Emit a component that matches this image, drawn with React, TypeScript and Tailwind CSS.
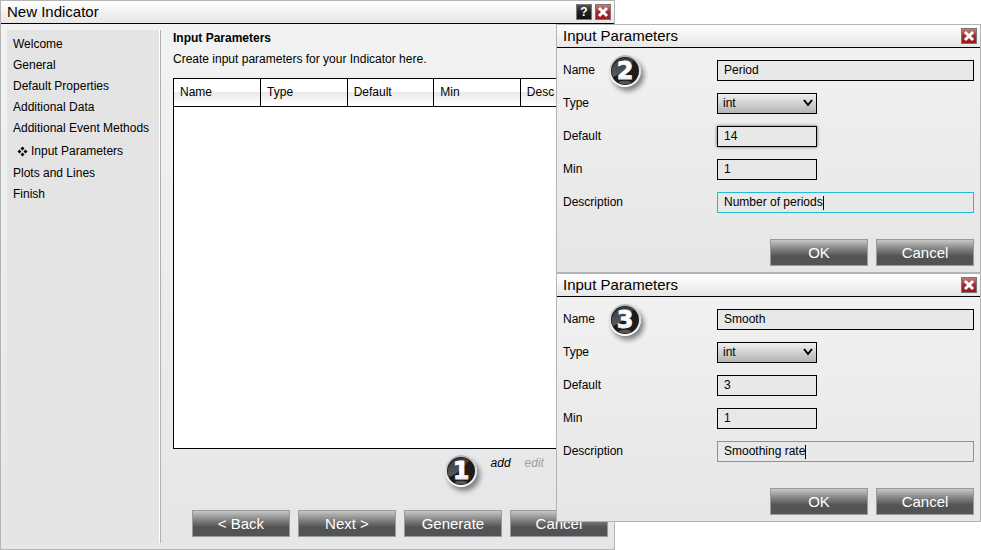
import { useState } from 'react';

const STEPS = [
  'Welcome',
  'General',
  'Default Properties',
  'Additional Data',
  'Additional Event Methods',
  'Input Parameters',
  'Plots and Lines',
  'Finish',
];

const COLUMNS = ['Name', 'Type', 'Default', 'Min', 'Desc'];

interface ParameterForm {
  name: string;
  type: string;
  defaultValue: string;
  min: string;
  description: string;
}

function StepBadge({ value }: { value: string }) {
  return (
    <svg
      viewBox="0 0 32 32"
      className="h-8 w-8 shrink-0 rounded-full not-italic shadow-[3px_4px_5px_rgba(0,0,0,0.45)]"
      aria-hidden="true"
    >
      <defs>
        <linearGradient id={`rim-${value}`} x1="0" y1="0" x2="0" y2="1">
          <stop offset="0" stopColor="#b4b4b4" />
          <stop offset="0.5" stopColor="#dedede" />
          <stop offset="1" stopColor="#ffffff" />
        </linearGradient>
        <linearGradient id={`sheen-${value}`} x1="0" y1="0" x2="0" y2="1">
          <stop offset="0" stopColor="#3a3a3a" />
          <stop offset="1" stopColor="#5c5c5c" />
        </linearGradient>
        <linearGradient id={`digit-${value}`} x1="0" y1="0" x2="0" y2="1">
          <stop offset="0.6" stopColor="#ffffff" />
          <stop offset="1" stopColor="#d4d4d4" />
        </linearGradient>
      </defs>
      <circle cx="16" cy="16" r="16" fill={`url(#rim-${value})`} />
      <circle cx="16" cy="16" r="14" fill="#1c1c1c" />
      <path d="M4 22 A13.8 13.8 0 0 1 25 5.5 C19 10 15 18 4 22 Z" fill={`url(#sheen-${value})`} />
      <ellipse cx="16" cy="27.5" rx="6" ry="1.8" fill="#555" />
      <text
        x="16"
        y="24"
        textAnchor="middle"
        fill={`url(#digit-${value})`}
        stroke={`url(#digit-${value})`}
        strokeWidth="0.8"
        className="font-['DejaVu_Sans',Verdana,sans-serif] text-[24px] font-bold"
      >
        {value}
      </text>
    </svg>
  );
}

function CloseButton() {
  return (
    <button
      type="button"
      aria-label="Close"
      className="flex h-4 w-4 items-center justify-center border border-[#777] bg-linear-to-b from-[#c47a7e] via-[#a02a32] to-[#a3141f]"
    >
      <svg viewBox="0 0 12 12" className="h-3 w-3" fill="none" stroke="#fff" strokeWidth="3">
        <path d="M2 2 L10 10 M10 2 L2 10" />
      </svg>
    </button>
  );
}

function TitleBar({ title, help }: { title: string; help?: boolean }) {
  return (
    <header className="flex h-[23px] items-center justify-between border-b border-black bg-linear-to-b from-white to-[#e6e6e6] pr-[3px] pl-[6px]">
      <h2 className="text-[15px] leading-5">{title}</h2>
      <div className="flex gap-[3px]">
        {help && (
          <button
            type="button"
            aria-label="Help"
            className="flex h-4 w-4 items-center justify-center border border-[#777] bg-linear-to-b from-[#555] via-[#222] to-[#111] text-[12px] leading-3 font-bold text-white"
          >
            ?
          </button>
        )}
        <CloseButton />
      </div>
    </header>
  );
}

function ActionButton({ label }: { label: string }) {
  return (
    <button
      type="button"
      className="h-[27px] w-[98px] border border-[#9a9a9a] bg-linear-to-b from-[#c8c8c8] via-[#7c7c7c] via-40% to-[#525354] to-65% text-[15px] leading-5 text-white"
    >
      {label}
    </button>
  );
}

function ParameterDialog({
  step,
  initial,
  highlightDefault,
}: {
  step: string;
  initial: ParameterForm;
  highlightDefault?: boolean;
}) {
  const [form, setForm] = useState<ParameterForm>(initial);

  const handleChange = (e: React.ChangeEvent<HTMLInputElement | HTMLSelectElement>) => {
    const { name, value } = e.target;
    setForm((prev) => ({ ...prev, [name]: value }));
  };

  return (
    <section className="border border-[#b4b4b4] bg-linear-to-b from-[#f2f2f2] to-[#e6e6e7]">
      <TitleBar title="Input Parameters" />
      <form className="px-[6px] pt-3 pb-[6px]" onSubmit={(e) => e.preventDefault()}>
        <div className="grid grid-cols-[154px_1fr] gap-y-3 leading-[21px]">
          <div className="flex h-[21px] items-center gap-[14px]">
            <label htmlFor={`name-${step}`}>Name</label>
            <StepBadge value={step} />
          </div>
          <input
            id={`name-${step}`}
            name="name"
            value={form.name}
            onChange={handleChange}
            className="h-[21px] w-full border border-black bg-[#e8e8e8] px-[6px] outline-none"
          />

          <label htmlFor={`type-${step}`}>Type</label>
          <div className="relative h-[21px] w-[100px]">
            <select
              id={`type-${step}`}
              name="type"
              value={form.type}
              onChange={handleChange}
              className="block h-[21px] w-full appearance-none border border-black bg-linear-to-b from-[#efefef] to-[#b4b4b4] px-[5px] leading-[19px] outline-none"
            >
              <option value="int">int</option>
            </select>
            <svg
              viewBox="0 0 10 8"
              className="pointer-events-none absolute top-[6px] right-1 h-2 w-[10px]"
              fill="none"
              stroke="#000"
              strokeWidth="2"
            >
              <path d="M1 1 L5 6 L9 1" />
            </svg>
          </div>

          <label htmlFor={`default-${step}`}>Default</label>
          <input
            id={`default-${step}`}
            name="defaultValue"
            value={form.defaultValue}
            onChange={handleChange}
            className={`h-[21px] w-[100px] border border-black bg-[#e8e8e8] px-[6px] outline-none ${
              highlightDefault ? 'shadow-[0_0_3px_rgba(0,0,0,0.6)]' : ''
            }`}
          />

          <label htmlFor={`min-${step}`}>Min</label>
          <input
            id={`min-${step}`}
            name="min"
            value={form.min}
            onChange={handleChange}
            className="h-[21px] w-[100px] border border-black bg-[#e8e8e8] px-[6px] outline-none"
          />

          <label htmlFor={`description-${step}`}>Description</label>
          <div className="flex h-[21px] items-center border border-[#1fbcdc] bg-[#e8e8e8] px-[6px]">
            <input
              id={`description-${step}`}
              name="description"
              value={form.description}
              onChange={handleChange}
              className="field-sizing-content h-[19px] outline-none"
            />
            <span className="h-[14px] w-px bg-black" />
          </div>
        </div>

        <div className="mt-[26px] flex justify-end gap-2">
          <ActionButton label="OK" />
          <ActionButton label="Cancel" />
        </div>
      </form>
    </section>
  );
}

function StepList() {
  return (
    <nav className="w-[154px] shrink-0 border-r border-[#b0b0b0] bg-[#e4e4e4] shadow-[inset_-1px_0_0_#fff]">
      <ul className="py-1 pl-[6px]">
        {STEPS.map((step) =>
          step === 'Input Parameters' ? (
            <li key={step} className="pl-1 leading-6">
              <a href="#" className="flex items-center gap-[3px]">
                <svg viewBox="0 0 11 11" className="h-[11px] w-[11px]" aria-hidden="true">
                  <path d="M5.5 0.5 L7.5 2.5 L5.5 4.5 L3.5 2.5 Z M5.5 6.5 L7.5 8.5 L5.5 10.5 L3.5 8.5 Z M2.5 3.5 L4.5 5.5 L2.5 7.5 L0.5 5.5 Z M8.5 3.5 L10.5 5.5 L8.5 7.5 L6.5 5.5 Z" />
                </svg>
                {step}
              </a>
            </li>
          ) : (
            <li key={step} className="leading-[21px]">
              <a href="#">{step}</a>
            </li>
          ),
        )}
      </ul>
    </nav>
  );
}

function WizardWindow() {
  return (
    <main className="col-span-2 col-start-1 row-start-1 flex flex-col border border-[#b4b4b4] bg-linear-to-b from-[#f3f3f3] to-[#e5e6e7]">
      <TitleBar title="New Indicator" help />
      <div className="flex grow gap-3 p-[6px]">
        <StepList />
        <div className="flex min-w-0 grow flex-col pb-[6px]">
          <h1 className="leading-4 font-bold">Input Parameters</h1>
          <p className="mt-1 leading-[18px]">Create input parameters for your Indicator here.</p>
          <div className="mt-[10px] grow border border-black bg-white">
            <table className="w-full table-fixed border-collapse">
              <thead>
                <tr className="h-[27px] border-b border-black bg-linear-to-b from-white from-50% via-[#e8e8e8] via-50% to-white">
                  {COLUMNS.map((column) => (
                    <th
                      key={column}
                      className="border-r border-black px-[6px] text-left font-normal last:border-r-0"
                    >
                      {column}
                    </th>
                  ))}
                </tr>
              </thead>
            </table>
          </div>
          <div className="mt-[6px] flex justify-end gap-[14px] pr-16 leading-4 italic">
            <StepBadge value="1" />
            <div className="flex items-start gap-[14px]">
              <button type="button" className="italic">
                add
              </button>
              <button type="button" className="text-[#a0a0a0] italic" disabled>
                edit
              </button>
            </div>
          </div>
          <div className="mt-[23px] flex justify-end gap-2">
            <ActionButton label="< Back" />
            <ActionButton label="Next >" />
            <ActionButton label="Generate" />
            <ActionButton label="Cancel" />
          </div>
        </div>
      </div>
    </main>
  );
}

export default function App() {
  return (
    <div className="grid min-h-screen grid-cols-[556fr_59fr_366fr] bg-white font-['Liberation_Sans',Arial,sans-serif] text-[12px] text-black">
      <WizardWindow />
      <div className="z-10 col-span-2 col-start-2 row-start-1 pt-6">
        <ParameterDialog
          step="2"
          initial={{ name: 'Period', type: 'int', defaultValue: '14', min: '1', description: 'Number of periods' }}
          highlightDefault
        />
        <ParameterDialog
          step="3"
          initial={{ name: 'Smooth', type: 'int', defaultValue: '3', min: '1', description: 'Smoothing rate' }}
        />
      </div>
    </div>
  );
}
